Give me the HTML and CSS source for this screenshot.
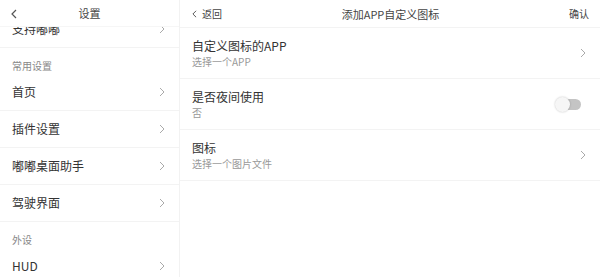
FILE: index.html
```html
<!DOCTYPE html>
<html lang="zh">
<head>
<meta charset="utf-8">
<link rel="stylesheet" href="styles.css">
</head>
<body>
<div class="app">
  <aside class="side">
    <div class="side-list">
      <div class="row first"><span>支持嘟嘟</span><svg class="chev" viewBox="0 0 6 10"><path d="M1 1l4 4-4 4"/></svg></div>
      <div class="section">常用设置</div>
      <div class="row"><span>首页</span><svg class="chev" viewBox="0 0 6 10"><path d="M1 1l4 4-4 4"/></svg></div>
      <div class="row"><span>插件设置</span><svg class="chev" viewBox="0 0 6 10"><path d="M1 1l4 4-4 4"/></svg></div>
      <div class="row"><span>嘟嘟桌面助手</span><svg class="chev" viewBox="0 0 6 10"><path d="M1 1l4 4-4 4"/></svg></div>
      <div class="row"><span>驾驶界面</span><svg class="chev" viewBox="0 0 6 10"><path d="M1 1l4 4-4 4"/></svg></div>
      <div class="section">外设</div>
      <div class="row"><span>HUD</span><svg class="chev" viewBox="0 0 6 10"><path d="M1 1l4 4-4 4"/></svg></div>
    </div>
    <div class="side-head">
      <svg class="back" viewBox="0 0 6 10"><path d="M5 1L1 5l4 4"/></svg>
      <span class="side-title">设置</span>
    </div>
  </aside>
  <main class="main">
    <header class="main-head">
      <div class="back-btn"><svg class="back" viewBox="0 0 6 10"><path d="M5 1L1 5l4 4"/></svg><span>返回</span></div>
      <div class="main-title">添加APP自定义图标</div>
      <div class="confirm">确认</div>
    </header>
    <div class="item">
      <div class="texts"><div class="t">自定义图标的APP</div><div class="s">选择一个APP</div></div>
      <svg class="chev" viewBox="0 0 6 10"><path d="M1 1l4 4-4 4"/></svg>
    </div>
    <div class="item">
      <div class="texts"><div class="t">是否夜间使用</div><div class="s">否</div></div>
      <div class="toggle"><div class="knob"></div></div>
    </div>
    <div class="item">
      <div class="texts"><div class="t">图标</div><div class="s">选择一个图片文件</div></div>
      <svg class="chev" viewBox="0 0 6 10"><path d="M1 1l4 4-4 4"/></svg>
    </div>
  </main>
</div>
</body>
</html>
```

FILE: styles.css
```css
* { box-sizing: border-box; }
html, body { margin: 0; padding: 0; background: #fff; }
body {
  font-family: "Noto Sans CJK SC", "Noto Sans", sans-serif;
  color: #333;
  width: 600px;
  height: 277px;
  overflow: hidden;
}
.app { display: flex; height: 277px; }
.side {
  width: 180px;
  flex: none;
  position: relative;
  border-right: 1px solid #f2f2f2;
  overflow: hidden;
}
.side-head {
  position: absolute;
  top: 0; left: 0; right: 0;
  height: 27px;
  background: #fff;
  border-bottom: 1px solid #f6f6f6;
  display: flex;
  align-items: center;
  justify-content: center;
}
.side-head .back { position: absolute; left: 11px; top: 9px; }
.side-title { font-size: 11px; color: #444; line-height: 12px; }
.back { width: 6px; height: 10px; fill: none; stroke: #555; stroke-width: 1.2; }
.side-list { padding-top: 11px; }
.row {
  height: 37px;
  padding: 0 14px 0 12px;
  display: flex;
  align-items: center;
  justify-content: space-between;
  border-bottom: 1px solid #f3f3f3;
  font-size: 12px;
  color: #333;
}
.row span { line-height: 14px; }
.chev { width: 6px; height: 10px; fill: none; stroke: #aaa; stroke-width: 1; flex: none; }
.section {
  height: 26px;
  padding: 0 12px 2px;
  display: flex;
  align-items: flex-end;
  font-size: 10px;
  color: #888;
  line-height: 12px;
}
.main { flex: 1; display: flex; flex-direction: column; }
.main-head {
  height: 28px;
  display: flex;
  align-items: center;
  justify-content: space-between;
  padding: 0 11px 0 12px;
  border-bottom: 1px solid #f3f3f3;
  font-size: 10px;
}
.back-btn { display: flex; align-items: center; gap: 5px; width: 50px; color: #444; }
.back-btn .back { width: 5px; height: 8px; }
.main-title { font-size: 11px; color: #444; }
.confirm { width: 50px; text-align: right; color: #444; }
.item {
  height: 51px;
  padding: 0 14px 0 12px;
  display: flex;
  align-items: center;
  justify-content: space-between;
  border-bottom: 1px solid #f3f3f3;
}
.texts { display: flex; flex-direction: column; margin-top: -1px; }
.t { font-size: 12px; line-height: 17px; color: #333; }
.s { font-size: 10px; line-height: 15px; color: #999; }
.toggle {
  position: relative;
  width: 24px;
  height: 11px;
  border-radius: 6px;
  background: #c4c4c4;
  margin-right: 5px;
}
.knob {
  position: absolute;
  left: -2px;
  top: -2px;
  width: 15px;
  height: 15px;
  border-radius: 50%;
  background: #f6f6f6;
  box-shadow: 0 0 2px rgba(0,0,0,0.25);
}
```
